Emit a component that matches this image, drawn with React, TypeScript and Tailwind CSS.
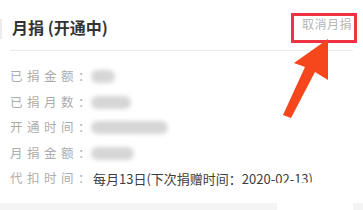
import React from 'react';

const FONT = { fontFamily: '"Noto Sans CJK SC", "Noto Sans", sans-serif' };

interface Row {
  label: string;
  blob?: number;
  value?: string;
}

const ROWS: Row[] = [
  { label: '已捐金额：', blob: 24 },
  { label: '已捐月数：', blob: 40 },
  { label: '开通时间：', blob: 77 },
  { label: '月捐金额：', blob: 43 },
  { label: '代扣时间：', value: '每月13日(下次捐赠时间：2020-02-13)' },
];

export default function App() {
  return (
    <div className="relative w-[363px] h-[210px] overflow-hidden bg-white flex flex-col" style={FONT}>
      {/* header */}
      <div className="flex items-center justify-between h-[50px] pl-[12px] pr-[11px] pt-[4px]">
        <span className="text-[16px] font-bold text-[#333333] leading-none">月捐 (开通中)</span>
        <span className="text-[12px] tracking-[0.5px] text-[#b4b4b4] leading-none -mt-[6px]">取消月捐</span>
      </div>
      <div className="mx-[10px] border-t border-[#ececec]" />

      {/* rows */}
      <div className="flex flex-col pt-[13px]">
        {ROWS.map((r) => (
          <div key={r.label} className="flex items-center h-[25.5px] pl-[10px]">
            <span className="w-[83px] shrink-0 text-[12.5px] tracking-[4.5px] text-[#acacac] whitespace-nowrap">
              {r.label}
            </span>
            {r.blob ? (
              <span
                className="h-[13px] rounded-full bg-[#d6d6d6] blur-[2px] -ml-[2px]"
                style={{ width: r.blob }}
              />
            ) : (
              <span className="text-[13px] text-[#3d3d3d] whitespace-nowrap">{r.value}</span>
            )}
          </div>
        ))}
      </div>

      <div className="mt-auto h-[7px] bg-[#f4f4f4]" />

      {/* faint edge at left */}
      <div className="absolute left-0 top-[19px] w-[2px] h-[20px] bg-[#ececec]" />

      {/* annotation overlay */}
      <svg className="absolute left-0 top-0" width="363" height="210" viewBox="0 0 363 210">
        <polygon points="277,183 340,182 353,203 353,210 277,210" fill="#ffffff" />
        <rect x="292.5" y="14.5" width="63" height="27" fill="none" stroke="#ef3340" strokeWidth="3" />
        <polygon
          points="328,39 328,80 315,72 291,118 283,115 305,67 294,63"
          fill="#f6461b"
        />
      </svg>
    </div>
  );
}
